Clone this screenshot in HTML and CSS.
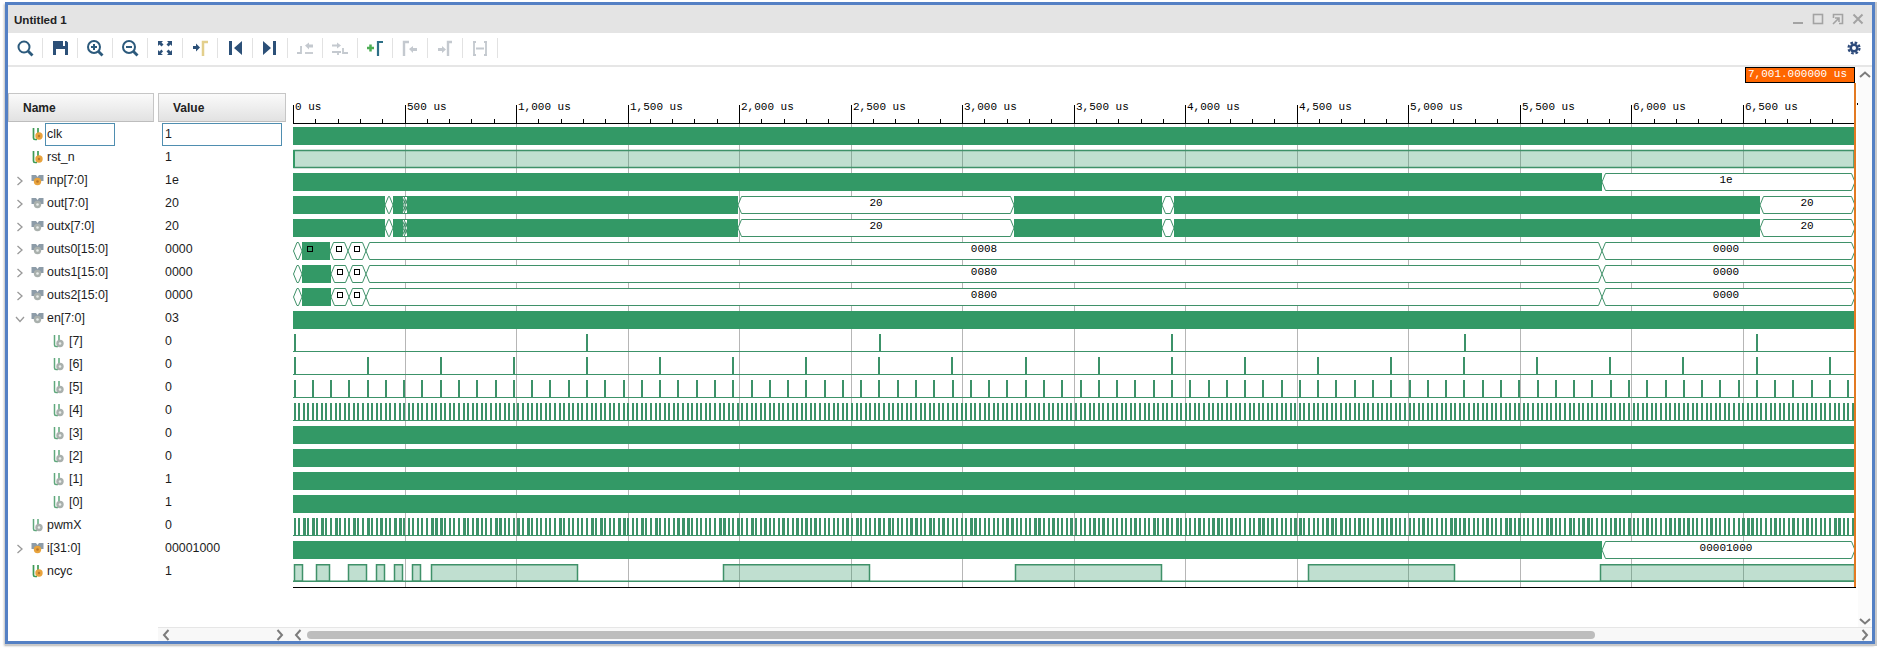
FILE: index.html
```html
<!DOCTYPE html>
<html lang="en">
<head>
<meta charset="utf-8">
<title>Untitled 1</title>
<link rel="stylesheet" href="styles.css">
</head>
<body>
<svg class="defs" width="0" height="0" aria-hidden="true">
  <symbol id="sc-in" viewBox="0 0 14 14"><path class="sg" d="M2.500 1v10q0 1.500 1.500 1.500h2"/><path class="sg" d="M7 1v6"/><circle cx="8" cy="9" r="3.700" fill="#e8a33d"/><circle cx="8" cy="9" r="1.200" fill="#b9772a"/></symbol>
  <symbol id="sc-int" viewBox="0 0 14 14"><path class="sg2" d="M2.500 1v10q0 1.500 1.500 1.500h2"/><path class="sg2" d="M7 1v6"/><circle cx="8" cy="9.500" r="3.700" fill="#a9b0ad"/><circle cx="8" cy="9.500" r="1.300" fill="#e8ecea"/></symbol>
  <symbol id="bus-in" viewBox="0 0 14 14"><path fill="#8d9ca8" d="M.5 2h4.500l1.500 2 1.500-2h4.500v6h-4l-2-2-2 2h-4z"/><circle cx="6.500" cy="8.500" r="3.700" fill="#e8a33d"/><circle cx="6.500" cy="8.500" r="1.300" fill="#b9772a"/></symbol>
  <symbol id="bus-int" viewBox="0 0 14 14"><path fill="#8d9ca8" d="M.5 2h4.500l1.500 2 1.500-2h4.500v6h-4l-2-2-2 2h-4z"/><circle cx="6.500" cy="8.500" r="3.700" fill="#a9b0ad"/><circle cx="6.500" cy="8.500" r="1.300" fill="#e8ecea"/></symbol>
  <symbol id="chev-r" viewBox="0 0 10 12"><path class="chev" d="M2.500 2l4.500 4-4.500 4"/></symbol>
  <symbol id="chev-d" viewBox="0 0 10 12"><path class="chev" d="M1 4l4 4.500 4-4.500"/></symbol>
</svg>
<div class="window">
  <header class="title">
    <span class="title-text">Untitled 1</span>
    <div class="win-btns">
      <svg class="wb" viewBox="0 0 20 20"><path d="M5 14h10" class="wbs"/></svg>
      <svg class="wb" viewBox="0 0 20 20"><rect x="5.500" y="5.500" width="9" height="9" class="wbs wbt"/></svg>
      <svg class="wb" viewBox="0 0 20 20"><path d="M5.500 9V5.500h9v9H11" class="wbs wbt"/><path d="M5 15l6-6M7 9h4v4" class="wbs wbt"/></svg>
      <svg class="wb" viewBox="0 0 20 20"><path d="M5.500 5.500l9 9M14.500 5.500l-9 9" class="wbs"/></svg>
    </div>
  </header>
  <nav class="toolbar">
    <div class="tool"><svg class="ti" viewBox="0 0 20 20"><circle cx="9" cy="9" r="5.500" class="tb"/><path d="M13 13l4.500 4.500" class="tb thick"/></svg></div><i class="sep"></i>
    <div class="tool"><svg class="ti" viewBox="0 0 20 20"><path fill="#2c5078" d="M3 3h10v5h2V3h1.500L18 4.500V17H3zM6 11v6h9v-6z"/></svg></div><i class="sep"></i>
    <div class="tool"><svg class="ti" viewBox="0 0 20 20"><circle cx="9" cy="9" r="6" class="tb"/><path d="M13.500 13.500l4 4" class="tb thick"/><path d="M6 9h6M9 6v6" class="tb"/></svg></div><i class="sep"></i>
    <div class="tool"><svg class="ti" viewBox="0 0 20 20"><circle cx="9" cy="9" r="6" class="tb"/><path d="M13.500 13.500l4 4" class="tb thick"/><path d="M6 9h6" class="tb"/></svg></div><i class="sep"></i>
    <div class="tool"><svg class="ti" viewBox="0 0 20 20"><path fill="#2c5078" d="M3 3h5L6.500 4.500l2 2-2 2-2-2L3 8zM17 3v5l-1.500-1.500-2 2-2-2 2-2L12 3zM3 17v-5l1.500 1.500 2-2 1.500 2-2 2L8 17zM17 17h-5l1.500-1.500-2-2 2-2 2 2L17 12z"/></svg></div><i class="sep"></i>
    <div class="tool"><svg class="ti" viewBox="0 0 20 20"><path fill="#2c5078" d="M3 8h3V5.500l4 4-4 4V11H3z"/><path fill="none" stroke="#e3cf8c" stroke-width="2.500" d="M13 18V4h5"/></svg></div><i class="sep"></i>
    <div class="tool"><svg class="ti" viewBox="0 0 20 20"><path fill="#2c5078" d="M4 3h3v14H4zM17 3v14l-8-7z"/></svg></div><i class="sep"></i>
    <div class="tool"><svg class="ti" viewBox="0 0 20 20"><path fill="#2c5078" d="M13 3h3v14h-3zM3 3v14l8-7z"/></svg></div><i class="sep"></i>
    <div class="tool"><svg class="ti" viewBox="0 0 20 20"><path class="dis" d="M2 15h4V9h1"/><path fill="#c4c9cf" d="M10 7.500l4-3v2h4v3h-4v2z"/><path class="dis" d="M10 15h8"/></svg></div><i class="sep"></i>
    <div class="tool"><svg class="ti" viewBox="0 0 20 20"><path fill="#c4c9cf" d="M2 6.500h5v-2l4 3-4 3v-2H2z"/><path class="dis" d="M2 14h6v3M8 14h3M13 10v5h5"/></svg></div><i class="sep"></i>
    <div class="tool"><svg class="ti" viewBox="0 0 20 20"><path fill="none" stroke="#4dae54" stroke-width="2.500" d="M2 10h7M5.500 6.500v7"/><path fill="none" stroke="#2c6f86" stroke-width="2.200" d="M13 18V4h5"/></svg></div><i class="sep"></i>
    <div class="tool"><svg class="ti" viewBox="0 0 20 20"><path class="dis2" d="M4 18V4h5"/><path fill="#c4c9cf" d="M9 11l4-3v2h4v3h-4v2z"/></svg></div><i class="sep"></i>
    <div class="tool"><svg class="ti" viewBox="0 0 20 20"><path fill="#c4c9cf" d="M3 10h4V8l4 3.500-4 3.500v-2H3z"/><path class="dis2" d="M13 18V4h4"/></svg></div><i class="sep"></i>
    <div class="tool"><svg class="ti" viewBox="0 0 20 20"><path class="dis" d="M4 4v13M16 4v13M3 4h3M14 4h3M3 17h3M14 17h3M6 10.500h8"/></svg></div><i class="sep"></i>
    <div class="tool tool-end"><svg class="ti" viewBox="0 0 20 20"><circle cx="10" cy="10" r="4.500" fill="#2d4a7a"/><circle cx="10" cy="10" r="5.500" fill="none" stroke="#2d4a7a" stroke-width="2.200" stroke-dasharray="2.600 1.720"/><circle cx="10" cy="10" r="2" fill="#fff"/></svg></div>
  </nav>
  <div class="main">
    <section class="left">
      <div class="heads"><div class="head head-name">Name</div><div class="head head-val">Value</div></div>
      <div class="row"><div class="nm"><span class="ch"></span><svg class="ic"><use href="#sc-in"/></svg><span class="nt sel">clk</span></div><div class="vl sel">1</div></div>
      <div class="row"><div class="nm"><span class="ch"></span><svg class="ic"><use href="#sc-in"/></svg><span class="nt">rst_n</span></div><div class="vl">1</div></div>
      <div class="row"><div class="nm"><svg class="ch"><use href="#chev-r"/></svg><svg class="ic"><use href="#bus-in"/></svg><span class="nt">inp[7:0]</span></div><div class="vl">1e</div></div>
      <div class="row"><div class="nm"><svg class="ch"><use href="#chev-r"/></svg><svg class="ic"><use href="#bus-int"/></svg><span class="nt">out[7:0]</span></div><div class="vl">20</div></div>
      <div class="row"><div class="nm"><svg class="ch"><use href="#chev-r"/></svg><svg class="ic"><use href="#bus-int"/></svg><span class="nt">outx[7:0]</span></div><div class="vl">20</div></div>
      <div class="row"><div class="nm"><svg class="ch"><use href="#chev-r"/></svg><svg class="ic"><use href="#bus-int"/></svg><span class="nt">outs0[15:0]</span></div><div class="vl">0000</div></div>
      <div class="row"><div class="nm"><svg class="ch"><use href="#chev-r"/></svg><svg class="ic"><use href="#bus-int"/></svg><span class="nt">outs1[15:0]</span></div><div class="vl">0000</div></div>
      <div class="row"><div class="nm"><svg class="ch"><use href="#chev-r"/></svg><svg class="ic"><use href="#bus-int"/></svg><span class="nt">outs2[15:0]</span></div><div class="vl">0000</div></div>
      <div class="row"><div class="nm"><svg class="ch"><use href="#chev-d"/></svg><svg class="ic"><use href="#bus-int"/></svg><span class="nt">en[7:0]</span></div><div class="vl">03</div></div>
      <div class="row"><div class="nm child"><svg class="ic"><use href="#sc-int"/></svg><span class="nt">[7]</span></div><div class="vl">0</div></div>
      <div class="row"><div class="nm child"><svg class="ic"><use href="#sc-int"/></svg><span class="nt">[6]</span></div><div class="vl">0</div></div>
      <div class="row"><div class="nm child"><svg class="ic"><use href="#sc-int"/></svg><span class="nt">[5]</span></div><div class="vl">0</div></div>
      <div class="row"><div class="nm child"><svg class="ic"><use href="#sc-int"/></svg><span class="nt">[4]</span></div><div class="vl">0</div></div>
      <div class="row"><div class="nm child"><svg class="ic"><use href="#sc-int"/></svg><span class="nt">[3]</span></div><div class="vl">0</div></div>
      <div class="row"><div class="nm child"><svg class="ic"><use href="#sc-int"/></svg><span class="nt">[2]</span></div><div class="vl">0</div></div>
      <div class="row"><div class="nm child"><svg class="ic"><use href="#sc-int"/></svg><span class="nt">[1]</span></div><div class="vl">1</div></div>
      <div class="row"><div class="nm child"><svg class="ic"><use href="#sc-int"/></svg><span class="nt">[0]</span></div><div class="vl">1</div></div>
      <div class="row"><div class="nm"><span class="ch"></span><svg class="ic"><use href="#sc-int"/></svg><span class="nt">pwmX</span></div><div class="vl">0</div></div>
      <div class="row"><div class="nm"><svg class="ch"><use href="#chev-r"/></svg><svg class="ic"><use href="#bus-in"/></svg><span class="nt">i[31:0]</span></div><div class="vl">00001000</div></div>
      <div class="row"><div class="nm"><span class="ch"></span><svg class="ic"><use href="#sc-in"/></svg><span class="nt">ncyc</span></div><div class="vl">1</div></div>
    </section>
    <svg id="wave" class="wave" viewBox="287 67 1571 560" width="1571" height="560"></svg>
    <aside class="vscroll">
      <svg class="arrow-v" viewBox="0 0 14 12"><path class="ar" d="M2 8l5-4.500 5 4.500"/></svg>
      <svg class="arrow-v" viewBox="0 0 14 12"><path class="ar" d="M2 4l5 4.500 5-4.500"/></svg>
    </aside>
  </div>
  <footer class="scrolls">
    <div class="hs hs-val">
      <svg class="arrow-h" viewBox="0 0 12 14"><path class="ar" d="M8.500 2L4 7l4.500 5"/></svg>
      <svg class="arrow-h" viewBox="0 0 12 14"><path class="ar" d="M3.500 2L8 7l-4.500 5"/></svg>
    </div>
    <div class="hs hs-wave">
      <svg class="arrow-h" viewBox="0 0 12 14"><path class="ar" d="M8.500 2L4 7l4.500 5"/></svg>
      <div class="thumb"></div>
      <svg class="arrow-h arrow-end" viewBox="0 0 12 14"><path class="ar" d="M3.500 2L8 7l-4.500 5"/></svg>
    </div>
  </footer>
</div>
<script src="wave.js"></script>
</body>
</html>
```
FILE: styles.css
```css
* { box-sizing: border-box; }
html, body { margin: 0; padding: 0; background: #fff; }
body { width: 1880px; height: 652px; overflow: hidden; padding: 2px 0 0 5px; font-family: "Liberation Sans", Arial, sans-serif; color: #1c1c1c; }
.defs { position: absolute; }
.window { width: 1870px; height: 642px; border: 3px solid #5480c4; background: #fff; box-shadow: 1px 1px 0 1px #c9c9c9, -1px 2px 2px #bdbdbd; display: flex; flex-direction: column; }
.title { height: 28px; background: #e4e4e4; display: flex; align-items: center; padding: 0 4px 0 6px; flex: none; }
.title-text { font-size: 11.6px; font-weight: 700; color: #222; }
.win-btns { margin-left: auto; display: flex; }
.wb { width: 20px; height: 20px; }
.wbs { stroke: #a3a3a3; stroke-width: 2; fill: none; }
.wbt { stroke-width: 1.600; }
.toolbar { height: 34px; border-bottom: 2px solid #e6e6e6; display: flex; align-items: center; flex: none; padding: 0 8px 2px 0; }
.tool { width: 34px; height: 32px; display: flex; align-items: center; justify-content: center; flex: none; }
.tool-end { margin-left: auto; width: 20px; }
.sep { width: 1px; height: 20px; background: #e2e2e2; flex: none; }
.ti { width: 20px; height: 20px; display: block; }
.tb { fill: none; stroke: #2c5a7c; stroke-width: 2; }
.thick { stroke-width: 2.800; }
.dis { fill: none; stroke: #c4c9cf; stroke-width: 1.800; }
.dis2 { fill: none; stroke: #c4c9cf; stroke-width: 2.400; }
.main { height: 560px; display: flex; flex: none; }
.left { width: 279px; padding-top: 26px; flex: none; }
.heads { display: flex; gap: 4px; height: 30px; }
.head { height: 29px; background: linear-gradient(#fafafa, #e2e2e2); border: 1px solid #c6c6c6; border-bottom-color: #bdbdbd; font-size: 12px; font-weight: 700; color: #222; display: flex; align-items: center; }
.head-name { width: 146px; padding-left: 14px; }
.head-val { width: 128px; padding-left: 14px; }
.row { height: 23px; display: flex; align-items: center; font-size: 12.4px; }
.nm { width: 154px; height: 23px; display: flex; align-items: center; padding-left: 7px; flex: none; }
.nm.child { padding-left: 44px; }
.ch { width: 10px; height: 12px; margin-right: 6px; flex: none; }
.chev { fill: none; stroke: #999; stroke-width: 1.300; }
.ic { width: 14px; height: 14px; flex: none; margin-top: -1px; }
.sg { fill: none; stroke: #3e9a55; stroke-width: 1.700; }
.sg2 { fill: none; stroke: #5fa87c; stroke-width: 1.500; }
.nt { padding-left: 1px; line-height: 21px; border: 1px solid transparent; }
.child .nt { padding-left: 2px; }
.nt.sel { width: 70px; height: 23px; border-color: #4f8eb0; }
.vl { width: 120px; height: 23px; padding-left: 2px; line-height: 21px; border: 1px solid transparent; flex: none; }
.vl.sel { border-color: #4f8eb0; }
.wave { display: block; flex: none; }
.vscroll { width: 14px; background: #fbfbfb; display: flex; flex-direction: column; justify-content: space-between; padding: 2px 0 0; flex: none; }
.arrow-v { width: 14px; height: 12px; display: block; }
.ar { fill: none; stroke: #7c7c7c; stroke-width: 2; }
.scrolls { height: 14px; display: flex; padding-left: 150px; flex: none; }
.hs { background: #f8f8f8; border-top: 1px solid #e6e6e6; display: flex; align-items: center; height: 14px; }
.hs-val { width: 129px; justify-content: space-between; padding: 0 1px 0 2px; }
.hs-wave { flex: 1; padding: 0 1px 0 5px; }
.arrow-h { width: 12px; height: 14px; flex: none; }
.thumb { width: 1288px; height: 8px; border-radius: 4px; background: #bdbdbd; margin-left: 3px; }
.arrow-end { margin-left: auto; }
.grid { stroke: #b6b6b6; stroke-width: 1; }
.axis { fill: #000; }
.lbl { font: 11px "Liberation Mono", "Courier New", monospace; fill: #000; }
.solid { fill: #339966; }
.thin { fill: #3c9269; }
.hex { fill: #fff; stroke: #3f9169; stroke-width: 1; }
.line { fill: none; stroke: #3f9169; stroke-width: 1; }
.soft { fill: #339966; fill-opacity: .31; stroke: #3f9169; stroke-width: 1.500; }
.box { fill: none; stroke: #000; stroke-width: 1; }
.cursor { fill: #e37a22; }
.marker { fill: #ff6600; stroke: #000; stroke-width: 1; }
.marker-t { font: 11px "Liberation Mono", "Courier New", monospace; fill: #fff; }
```
FILE: wave.js
```javascript
(function () {
  var NS = "http://www.w3.org/2000/svg";
  var svg = document.getElementById("wave");
  var X0 = 293, X1 = 1854, PX = 0.22305;

  function el(tag, cls, attrs, text) {
    var n = document.createElementNS(NS, tag);
    if (cls) n.setAttribute("class", cls);
    for (var k in attrs) n.setAttribute(k, attrs[k]);
    if (text) n.textContent = text;
    svg.appendChild(n);
    return n;
  }
  function rect(cls, x, y, w, h) { return el("rect", cls, { x: x, y: y, width: w, height: h }); }
  function rowY(i) { return 127 + 23 * i; }
  function tx(us) { return X0 + us * PX; }

  // time axis and grid
  for (var k = 0; k <= 13; k++) {
    var mx = Math.round(tx(k * 500));
    if (k) el("line", "grid", { x1: mx + 0.5, x2: mx + 0.5, y1: 124, y2: 587 });
    rect("axis", mx, 105, 1, 18);
    var us = k * 500;
    var t = (us >= 1000 ? Math.floor(us / 1000) + "," + ("00" + us % 1000).slice(-3) : us) + " us";
    el("text", "lbl", { x: mx + 2, y: 110 }, t);
  }
  for (var m = 1; m * 100 < 7001; m++) {
    if (m % 5) rect("axis", Math.round(tx(m * 100)), 119, 1, 4);
  }
  rect("axis", X0, 123, X1 - X0 + 1, 1);
  rect("axis", X0, 587, X1 - X0 + 2, 1);
  rect("axis", 1857, 103, 1, 2);

  function solid(i, a, b) { rect("solid", a, rowY(i), b - a, 18); }
  function hex(i, a, b, label, lx) {
    var y = rowY(i) + 0.5, c = 3.5;
    var pts = [[a, y + 8.5], [a + c, y], [b - c, y], [b, y + 8.5], [b - c, y + 17], [a + c, y + 17]];
    el("polygon", "hex", { points: pts.join(" ") });
    if (label) el("text", "lbl", { x: lx || (a + b) / 2, y: rowY(i) + 10, "text-anchor": "middle" }, label);
  }
  function box(i, x) { rect("box", x + 0.5, rowY(i) + 4.5, 5, 5); }
  function pulses(i, period, w, wf) {
    var y = rowY(i);
    rect("thin", X0, y + 17, X1 - X0, 1);
    for (var n = 0; ; n++) {
      var x = Math.round(X0 + 0.5 + n * period);
      if (x >= X1) break;
      rect("thin", x, y, wf ? wf(n) : w, 18);
    }
  }

  // clk, en, [3..0]
  [0, 8, 13, 14, 15, 16].forEach(function (i) { solid(i, X0, X1); });

  // rst_n
  rect("soft", X0 + 1, rowY(1) + 0.5, X1 - X0 - 1, 17);
  rect("solid", X0, rowY(1), 2, 18);

  // inp, i
  [2, 18].forEach(function (i) {
    solid(i, X0, 1602);
  });
  hex(2, 1602, 1855, "1e", 1726);
  hex(18, 1602, 1855, "00001000", 1726);

  // out, outx
  [3, 4].forEach(function (i) {
    solid(i, X0, 385);
    hex(i, 385, 393);
    solid(i, 393, 403);
    hex(i, 403, 405.5);
    hex(i, 405, 407.5);
    solid(i, 407, 738);
    hex(i, 738, 1014, "20");
    solid(i, 1014, 1162);
    hex(i, 1162, 1174);
    solid(i, 1174, 1760);
    hex(i, 1760, 1855, "20", 1807);
  });

  // outs0..2
  [["0008", 330, 348], ["0080", 331, 349], ["0800", 331, 349]].forEach(function (d, n) {
    var i = 5 + n;
    hex(i, 293.5, 302);
    solid(i, 302, d[1]);
    hex(i, d[1], d[2]);
    hex(i, d[2], 366);
    hex(i, 366, 1602, d[0]);
    hex(i, 1602, 1855, "0000", 1726);
    box(i, d[1] + 6);
    box(i, 354);
  });
  box(5, 307);

  // en[7..4]
  pulses(9, 292.5, 2);
  pulses(10, 73.1, 2);
  pulses(11, 18.28, 2);
  pulses(12, 4.57, 2);

  // pwmX: duty varies from cycle to cycle
  pulses(17, 4.57, 2, function (n) {
    return (n % 9 === 4 || n % 13 === 6 || n % 7 === 2) ? 3 : 2;
  });

  // ncyc
  var highs = [[294, 302], [316, 329], [348, 366], [376, 384], [394, 402], [412, 420], [431, 577], [723, 869], [1015, 1161], [1308, 1454], [1600, 1854]];
  var ny = rowY(19);
  rect("thin", X0, ny + 16.5, X1 - X0, 1.5);
  highs.forEach(function (h) {
    rect("soft", h[0] + 0.5, ny + 0.75, h[1] - h[0], 16.5);
  });

  // end-of-simulation cursor and its label
  rect("cursor", 1854, 83, 2, 504);
  rect("marker", 1745.5, 67.5, 109, 15);
  el("text", "marker-t", { x: 1748, y: 77 }, "7,001.000000 us");
})();
```
